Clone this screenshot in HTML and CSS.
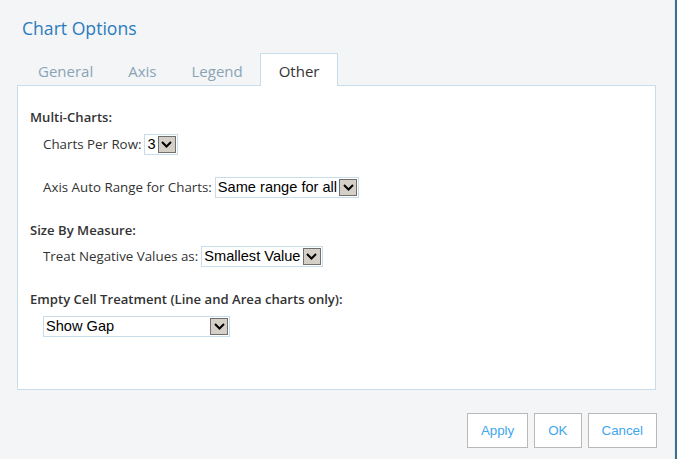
FILE: index.html
```html
<!DOCTYPE html>
<html>
<head>
<meta charset="utf-8">
<link rel="stylesheet" href="styles.css">
</head>
<body>
<div class="dialog">
  <h1 class="title">Chart Options</h1>
  <div class="tabs">
    <div class="tab">General</div>
    <div class="tab">Axis</div>
    <div class="tab">Legend</div>
    <div class="tab active">Other</div>
  </div>
  <div class="panel">
    <div class="heading h1">Multi-Charts:</div>
    <div class="row r1">
      <span class="label">Charts Per Row:</span>
      <span class="select s-row"><span class="val">3</span><span class="arrow"><svg width="11" height="7" viewBox="0 0 11 7"><path d="M1 1 L5.5 5.5 L10 1" fill="none" stroke="#000" stroke-width="2"/></svg></span></span>
    </div>
    <div class="row r2">
      <span class="label">Axis Auto Range for Charts:</span>
      <span class="select s-range"><span class="val">Same range for all</span><span class="arrow"><svg width="11" height="7" viewBox="0 0 11 7"><path d="M1 1 L5.5 5.5 L10 1" fill="none" stroke="#000" stroke-width="2"/></svg></span></span>
    </div>
    <div class="heading h2">Size By Measure:</div>
    <div class="row r3">
      <span class="label">Treat Negative Values as:</span>
      <span class="select s-neg"><span class="val">Smallest Value</span><span class="arrow"><svg width="11" height="7" viewBox="0 0 11 7"><path d="M1 1 L5.5 5.5 L10 1" fill="none" stroke="#000" stroke-width="2"/></svg></span></span>
    </div>
    <div class="heading h3">Empty Cell Treatment (Line and Area charts only):</div>
    <div class="row r4">
      <span class="select s-gap"><span class="val">Show Gap</span><span class="arrow"><svg width="11" height="7" viewBox="0 0 11 7"><path d="M1 1 L5.5 5.5 L10 1" fill="none" stroke="#000" stroke-width="2"/></svg></span></span>
    </div>
  </div>
  <div class="buttons">
    <button class="btn">Apply</button>
    <button class="btn">OK</button>
    <button class="btn">Cancel</button>
  </div>
</div>
</body>
</html>
```
FILE: styles.css
```css
html, body {
  margin: 0;
  padding: 0;
}
body {
  width: 677px;
  height: 459px;
  overflow: hidden;
  background: #f3f5f7;
}
.dialog {
  box-sizing: border-box;
  width: 677px;
  height: 459px;
  background: #f3f5f7;
  border-right: 2px solid #3b6f8f;
  box-shadow: inset -1px 0 0 #e6ebef;
}
.title {
  margin: 0;
  padding: 16px 0 0 22px;
  height: 37px;
  box-sizing: border-box;
  font-family: "Open Sans", sans-serif;
  font-weight: normal;
  font-size: 17.6px;
  line-height: 24px;
  color: #2b7bbd;
}
.tabs {
  display: flex;
  margin-top: 16px;
  padding-left: 20px;
  height: 32px;
  position: relative;
  z-index: 1;
}
.tab {
  box-sizing: border-box;
  height: 33px;
  padding: 3px 17px 0 17px;
  border: 1px solid transparent;
  border-bottom: none;
  font-family: "Open Sans", sans-serif;
  font-size: 15px;
  line-height: 28px;
  color: #8aa4b5;
}
.tab + .tab {
  margin-left: -1px;
}
.tab.active {
  background: #fff;
  border-color: #c8dce9;
  color: #333;
  padding-left: 18px;
  padding-right: 18px;
}
.panel {
  box-sizing: border-box;
  margin-left: 17px;
  width: 639px;
  height: 305px;
  background: #fff;
  border: 1px solid #c8dce9;
  padding: 21px 12px 0 12px;
  font-family: "Open Sans", sans-serif;
  font-size: 13.33px;
  color: #333;
}
.heading {
  font-weight: 600;
  font-size: 13.1px;
  line-height: 20px;
  height: 20px;
}
.row {
  display: flex;
  align-items: center;
  height: 22px;
  padding-left: 13px;
}
.label {
  margin-right: 3px;
}
.r1 { margin-top: 6px; }
.r2 { margin-top: 21px; }
.h2 { margin-top: 22px; }
.r3 { margin-top: 5px; }
.h3 { margin-top: 22px; }
.r4 { margin-top: 6px; }
.select {
  box-sizing: border-box;
  display: inline-flex;
  align-items: center;
  height: 21px;
  border: 1px solid #c8dce9;
  background: #fff;
  padding: 0 1px 0 2px;
  font-family: "Liberation Sans", Arial, sans-serif;
  font-size: 14.6px;
  color: #000;
}
.val {
  flex: 1;
  line-height: 18px;
  white-space: nowrap;
}
.arrow {
  box-sizing: border-box;
  width: 18px;
  height: 17px;
  margin-left: 2px;
  background: #d4d0c8;
  border: 1px solid #6f6f6f;
  display: flex;
  align-items: center;
  justify-content: center;
}
.s-gap {
  width: 187px;
}
.buttons {
  display: flex;
  justify-content: flex-end;
  gap: 6px;
  margin-top: 23px;
  padding-right: 18px;
}
.btn {
  box-sizing: border-box;
  height: 35px;
  padding: 0 13px;
  background: #fff;
  border: 1px solid #b9b9b9;
  border-radius: 0;
  font-family: "Liberation Sans", Arial, sans-serif;
  font-size: 13.33px;
  color: #3ea6ee;
}
```
